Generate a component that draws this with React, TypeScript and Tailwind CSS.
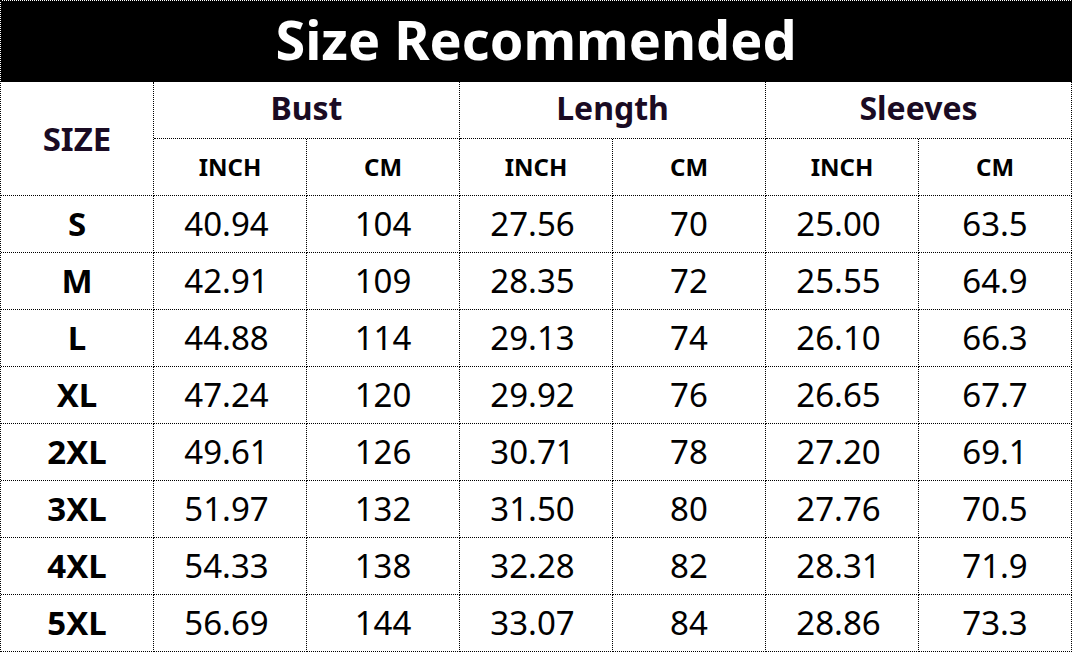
const sizes = [
    {label: "S", values: ["40.94", "104", "27.56", "70", "25.00", "63.5"]},
    {label: "M", values: ["42.91", "109", "28.35", "72", "25.55", "64.9"]},
    {label: "L", values: ["44.88", "114", "29.13", "74", "26.10", "66.3"]},
    {label: "XL", values: ["47.24", "120", "29.92", "76", "26.65", "67.7"]},
    {label: "2XL", values: ["49.61", "126", "30.71", "78", "27.20", "69.1"]},
    {label: "3XL", values: ["51.97", "132", "31.50", "80", "27.76", "70.5"]},
    {label: "4XL", values: ["54.33", "138", "32.28", "82", "28.31", "71.9"]},
    {label: "5XL", values: ["56.69", "144", "33.07", "84", "28.86", "73.3"]},
];

const groups = ["Bust", "Length", "Sleeves"];

const cell = "flex items-center justify-center border-r border-b border-dotted border-black";

export default function App() {
    return (
        <section className="w-[1073px] h-[653px] bg-white font-['Noto_Sans',sans-serif]">
            <div className="grid grid-cols-[repeat(7,153px)] grid-rows-[81px_repeat(10,57px)] w-[1072px] border-l border-t border-dotted border-black">
                <div className={`${cell} col-span-7 bg-black text-white font-bold text-[54px] leading-none pb-1`}>
                    Size Recommended
                </div>
                <div className={`${cell} row-span-2 font-bold text-[33px] text-[#1a0b23]`}>SIZE</div>
                {groups.map((g) => (
                    <div key={g} className={`${cell} col-span-2 font-bold text-[32px] text-[#1a0b23] pb-1`}>
                        {g}
                    </div>
                ))}
                {groups.map((g) => (
                    <>
                        <div key={g + "in"} className={`${cell} font-bold text-[24px] text-black`}>INCH</div>
                        <div key={g + "cm"} className={`${cell} font-bold text-[24px] text-black`}>CM</div>
                    </>
                ))}
                {sizes.map((s) => (
                    <>
                        <div key={s.label} className={`${cell} font-bold text-[33px] text-black`}>{s.label}</div>
                        {s.values.map((v, i) => (
                            <div
                                key={s.label + i}
                                className={`${cell} text-[33px] text-black ${i % 2 === 0 ? "pr-[7px]" : ""}`}
                            >
                                {v}
                            </div>
                        ))}
                    </>
                ))}
            </div>
        </section>
    );
}
